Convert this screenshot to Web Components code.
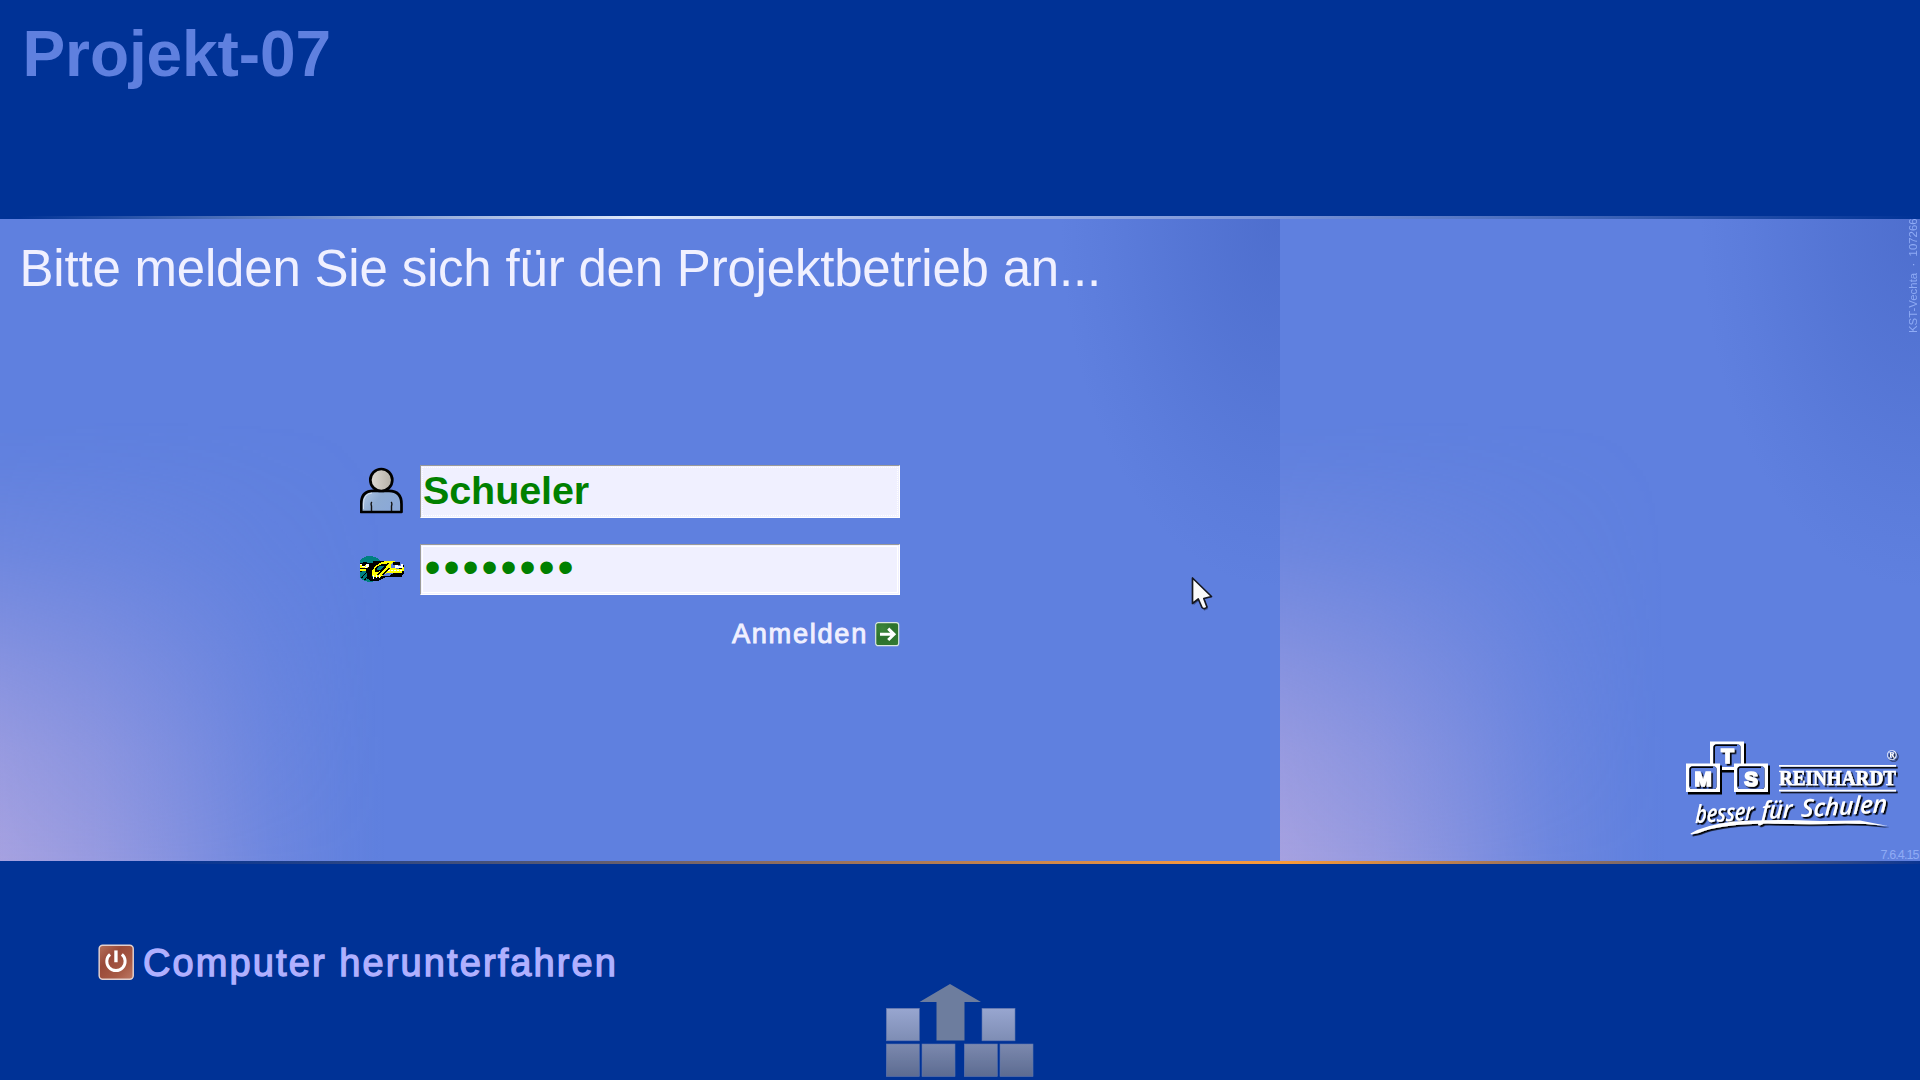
<!DOCTYPE html>
<html lang="de">
<head>
<meta charset="utf-8">
<title>Projekt-07</title>
<style>
html,body{margin:0;width:1920px;height:1080px;overflow:hidden;background:#003296}
body{font-family:"Liberation Sans",Arial,sans-serif}
</style>
</head>
<body>
<login-screen>
  <screen-title slot="top">Projekt-07</screen-title>
  <login-form slot="main" heading="Bitte melden Sie sich für den Projektbetrieb an...">
    <login-field kind="user"><user-icon slot="icon"></user-icon>Schueler</login-field>
    <login-field kind="secret"><key-icon slot="icon"></key-icon>••••••••</login-field>
    <submit-link slot="action">Anmelden</submit-link>
  </login-form>
  <brand-side slot="side" site="KST-Vechta&nbsp;&nbsp;·&nbsp;&nbsp;107266" version="7.6.4.15"></brand-side>
  <power-link slot="bottom">Computer herunterfahren</power-link>
  <block-mark slot="mark"></block-mark>
</login-screen>
<mouse-pointer></mouse-pointer>
<script>
const define = (name, render) => customElements.define(name, class extends HTMLElement {
  constructor() { super(); this.attachShadow({ mode: 'open' }); }
  connectedCallback() { this.shadowRoot.innerHTML = render(this); }
});

define('login-screen', () => `
<style>
:host{display:grid;grid-template-rows:216px 3px 642px 3px 216px;width:1920px;height:1080px;background:#003296}
.line1{background:linear-gradient(90deg,#003296 0,#003296 1%,#8ba3d6 21%,#dfe9fb 33.3%,#9db2e6 50%,#7a94d8 66%,#003296 100%)}
.line2{background:linear-gradient(90deg,#003296 0,#003296 8%,#525775 28%,#a87757 46%,#f49740 62%,#fa9a38 67%,#a87757 78%,#5a5d76 91%,#0b3592 100%)}
.mid{display:flex}
.pane{display:grid;grid-template:642px/100%;height:642px;background:
 radial-gradient(ellipse 220px 370px at 100% 0,rgba(64,96,192,.55),rgba(64,96,192,.34) 40%,rgba(64,96,192,.1) 80%,transparent) #5f80df}
.pane::before{content:"";grid-area:1/1;align-self:end;width:385px;height:440px;
 background:linear-gradient(90deg,#a6a1e0,rgba(166,161,224,.79) 25%,rgba(166,161,224,.55) 45%,rgba(166,161,224,.22) 70%,rgba(166,161,224,.05) 90%,rgba(166,161,224,0));
 -webkit-mask-image:linear-gradient(0deg,#000,rgba(0,0,0,.79) 25%,rgba(0,0,0,.55) 45%,rgba(0,0,0,.22) 70%,rgba(0,0,0,.05) 90%,transparent);
 mask-image:linear-gradient(0deg,#000,rgba(0,0,0,.79) 25%,rgba(0,0,0,.55) 45%,rgba(0,0,0,.22) 70%,rgba(0,0,0,.05) 90%,transparent)}
.pane slot{display:block;grid-area:1/1;z-index:1}
.a{width:1280px}.b{width:640px}
.bot{display:grid;grid-template-columns:860px 200px;align-items:start}
</style>
<slot name="top"></slot><div class="line1"></div>
<div class="mid"><div class="pane a"><slot name="main"></slot></div><div class="pane b"><slot name="side"></slot></div></div>
<div class="line2"></div>
<div class="bot"><slot name="bottom"></slot><slot name="mark"></slot></div>`);

define('screen-title', () => `
<style>:host{display:block;padding:17px 0 0 22.5px;font:bold 64px/74px "Liberation Sans",sans-serif;color:#5f80df;letter-spacing:-.1px;white-space:nowrap}</style><slot></slot>`);

define('login-form', el => `
<style>
:host{display:flex;flex-direction:column;height:642px}
h1{margin:0;padding:21px 0 0 19.5px;height:226px;box-sizing:border-box;font:51px/58px "Liberation Sans",sans-serif;letter-spacing:-.2px;color:#f0f0ff;white-space:nowrap}
.rows{padding:20px 0 0 360px;width:540px;display:flex;flex-direction:column;gap:26px}
.act{display:flex;justify-content:flex-end;width:900px;padding-top:22px}
</style>
<h1>${el.getAttribute('heading')}</h1>
<div class="rows"><slot></slot></div><div class="act"><slot name="action"></slot></div>`);

define('login-field', el => {
  const secret = el.getAttribute('kind') === 'secret';
  return `
<style>
:host{display:flex;align-items:flex-start;height:${secret ? 51 : 53}px}
.ic{width:60px;height:100%}
.box{box-sizing:border-box;width:480px;height:100%;background:#f0f0ff;border:1px solid;border-color:#9a9a98 #fff #fff #9a9a98;padding:1px}
.in{box-sizing:border-box;height:100%;border:1px ${secret ? 'solid #fff' : 'dotted #fff'};white-space:nowrap;color:#008000;
 font:bold 40px/46px "Liberation Sans",sans-serif;${secret ? 'font-weight:400;font-size:46px;line-height:41px;letter-spacing:2.9px;padding-left:1.5px' : 'font-size:39.5px;line-height:44px;letter-spacing:-.1px;padding-left:0'}}
</style><div class="ic"><slot name="icon"></slot></div><div class="box"><div class="in"><slot></slot></div></div>`;
});

define('submit-link', () => `
<style>
:host{display:flex;align-items:center;gap:7px;height:34px;color:#f0f0ff;font:27.2px/34px "Liberation Sans",sans-serif}
span{letter-spacing:1.7px;-webkit-text-stroke:.9px #f0f0ff}
svg{display:block}
</style><span><slot></slot></span>
<svg width="25" height="25" viewBox="0 0 25 25"><defs><radialGradient id="g" cx=".3" cy=".25" r=".9"><stop offset="0" stop-color="#3d863c"/><stop offset=".5" stop-color="#2c722c"/><stop offset="1" stop-color="#327932"/></radialGradient></defs>
<rect x=".7" y=".7" width="23" height="23" rx="2.5" fill="url(#g)" stroke="#d9e8df" stroke-width="1.2"/>
<path d="M5 12.3H18M13.2 6.7L19 12.3L13.2 18" fill="none" stroke="#fff" stroke-width="3"/></svg>`);

define('user-icon', () => `
<style>:host{display:block}svg{display:block}</style>
<svg width="48" height="53" viewBox="360 465 48 53"><defs>
<linearGradient id="h" x1="0" x2="1"><stop offset="0" stop-color="#dedad4"/><stop offset="1" stop-color="#b5b0a6"/></linearGradient>
<linearGradient id="b" x1="0" x2="1" y1="0" y2=".4"><stop offset="0" stop-color="#b5cbe6"/><stop offset=".5" stop-color="#8eabd2"/><stop offset="1" stop-color="#8aa8d8"/></linearGradient></defs>
<path d="M361.200 512V504C361.200 494 366 490.800 373 490.800H389C397 490.800 401.500 495 401.500 504V512Z" fill="url(#b)" stroke="#000" stroke-width="2.700" stroke-linejoin="round"/>
<path d="M371.500 511V506Q370.500 503 372 502M391.500 511V506Q392.500 503 391 502" fill="none" stroke="#111" stroke-width="1.4"/>
<path d="M363.500 509V504Q363.500 494 372 493" fill="none" stroke="#d5e2f2" stroke-width="1"/>
<circle cx="381.300" cy="480" r="11" fill="url(#h)" stroke="#000" stroke-width="2.700"/>
</svg>`);

define('key-icon', () => `
<style>:host{display:block}svg{display:block}</style>
<svg width="48" height="51" viewBox="360 544 48 51" shape-rendering="crispEdges">
<g transform="translate(344.500 550)">
<clipPath id="c"><path d="M14 0H60V40H14Z"/></clipPath>
<g clip-path="url(#c)">
<circle cx="25.500" cy="19" r="13" fill="#008080"/>
<path d="M14 13h4v-1h4v1h6v-2h13v2l-8 2-4 5-2 6 4 5h-3l-5-2-1-8-3-4-2 5-4 1H14z" fill="#000"/>
<path d="M14 15h3v1h3v-1h3v3h-2v3h-7z" fill="#ff0"/>
<path d="M14 14h3v1h-3zM17 16h3v1h-3zM21 14h3v3h-2v1h-2v-1h1z" fill="#fff"/>
<path d="M14 18.500h7" stroke="#000" stroke-width="1"/>
<path d="M24 27l2 4h8l7-4h16l2-3V15L45 26z" fill="#000"/>
<path d="M27 26V22l3-5 5-4 6-2h9v2h-2l-2 2v3h5l1 1h5v-2h2v4h-2v2H42l-6 4h-8v-1z" fill="#ff0"/>
<path d="M30 21v-2l3-3 4-2h5v2l-3 4-6 2h-3z" fill="#000"/>
<path d="M32 20v-1l3-3h4v1l-3 3z" fill="#008080"/>
<path d="M33 25l8-8 3-4M38 25l7-7" stroke="#000" fill="none" stroke-width="1"/>
<path d="M49 12h6v3h-7v-2z" fill="#000"/><path d="M50 15h3v1h3v-2h2v4h-7l-1-1z" fill="#fff"/>
<path d="M43 20.500h15" stroke="#fff" fill="none" stroke-dasharray="2 1"/>
<path d="M28.500 25v4M31.500 25v3M34.500 25v3" stroke="#fff" fill="none"/>
<path d="M17 28l6-7M20 30l4-5" stroke="#000" fill="none"/>
</g></g></svg>`);

define('brand-side', el => `
<style>
:host{display:grid;grid-template-columns:390px 250px;grid-template-rows:511px 131px;height:642px}
.site{grid-column:2;justify-self:end;width:14px;height:110px;margin-top:4px;writing-mode:vertical-rl;transform:rotate(180deg);font:11.4px/14px "Liberation Sans",sans-serif;color:#8fabf5;white-space:nowrap}
.logo{grid-column:2;display:block}
svg{display:block}
</style>
<div class="site">${el.getAttribute('site')}</div>
<svg class="logo" width="250" height="131" viewBox="0 0 250 131">
<defs>
<g id="box"><rect x="2" y="2" width="34" height="29" fill="#000"/><path fill="#fff" fill-rule="evenodd" d="M0 0H34V28.500H0ZM5.500 3Q3.500 3 3.500 5.500V23Q3.500 25.500 6 25.500H28Q30.500 25.500 30.500 23V5.500Q30.500 3 28 3Z"/><rect x="3.500" y="3" width="27" height="22.500" rx="3" fill="#5f80df"/><path d="M4.200 23V6Q4.200 3.800 6.500 3.800H27" fill="none" stroke="#000" stroke-width="1.500"/></g>
<filter id="s" x="-10%" y="-20%" width="120%" height="150%"><feDropShadow dx="1.700" dy="1.700" stdDeviation="0.200" flood-color="#000"/></filter>
</defs>
<use href="#box" x="40" y="11.500"/><use href="#box" x="16" y="33.500"/><use href="#box" x="64" y="33.500"/>
<g filter="url(#s)" fill="#fff">
<g font-family="Liberation Sans,sans-serif" font-weight="bold" font-size="20.500" stroke="#fff" stroke-width="1.700" text-anchor="middle"><text x="57.500" y="33">T</text><text x="33" y="55.500" textLength="20">M</text><text x="81" y="55.500">S</text></g>
<text x="109" y="54.500" font-family="Liberation Serif,serif" font-weight="bold" font-size="20" stroke="#fff" stroke-width=".5" textLength="117" lengthAdjust="spacingAndGlyphs">REINHARDT</text>
<text x="216.500" y="29.500" font-family="Liberation Serif,serif" font-weight="bold" font-size="14">®</text>
<rect x="109" y="35" width="117" height="1.700"/><rect x="109" y="59.700" width="117" height="1.700"/>
<g transform="translate(25 93) rotate(-3.200) skewX(-6)" font-family="Open Sans,sans-serif" font-style="italic" font-weight="600" font-size="24.500"><text x="0" y="0" textLength="58" lengthAdjust="spacingAndGlyphs">besser</text><text x="66" y="0" textLength="31" lengthAdjust="spacingAndGlyphs">für</text><text x="106" y="0" textLength="86" lengthAdjust="spacingAndGlyphs">Schulen</text></g>
<path d="M20.500 103.500Q35 95 62 91.800Q100 88.500 150 91L190 90.500L218 96Q185 92.500 160 94Q130 94.500 98 93.500Q55 94 34 101Q28 104 21 104.500Z"/>
</g>
<text x="210.500" y="128.500" font-family="Liberation Sans,sans-serif" font-size="12.500" fill="#8fabf5" textLength="39">${el.getAttribute('version')}</text>
</svg>`);

define('power-link', () => `
<style>
:host{display:flex;align-items:center;gap:8.500px;padding:76px 0 0 98px;height:44px;color:#b0b0ff;font:38px/44px "Liberation Sans",sans-serif;white-space:nowrap}
span{letter-spacing:2.1px;-webkit-text-stroke:1.300px #b0b0ff;padding-top:1px}
svg{display:block;width:36.500px;height:36.500px}
</style>
<svg viewBox="0 0 37 37"><defs><linearGradient id="p" x1="0" y1="0" x2="1" y2="1"><stop offset="0" stop-color="#b4705b"/><stop offset=".35" stop-color="#994a39"/><stop offset=".7" stop-color="#a75a45"/><stop offset="1" stop-color="#bd7864"/></linearGradient></defs>
<rect x="1.200" y="1.200" width="34.500" height="34.500" rx="3.500" fill="url(#p)" stroke="#e2cfcd" stroke-width="1.500"/>
<path d="M12.200 10.500A9.300 9.300 0 1 0 24.200 10.500" fill="none" stroke="#fff" stroke-width="3"/><path d="M18.200 6.500V18.500" stroke="#fff" stroke-width="3.400"/></svg>
<span><slot></slot></span>`);

define('block-mark', () => {
  const block = (x, y, f) => `<rect x="${x}" y="${y}" width="33" height="32.500" fill="url(#${f})" stroke="#5f75ae" stroke-width=".6"/>`;
  return `
<style>:host{display:block;padding-top:96px}svg{display:block}</style>
<svg width="200" height="120" viewBox="0 0 200 120"><defs>
<linearGradient id="t" x2="0" y2="1"><stop offset="0" stop-color="#98a6d0"/><stop offset="1" stop-color="#7e8db4"/></linearGradient>
<linearGradient id="u" x2="0" y2="1"><stop offset="0" stop-color="#7c89ae"/><stop offset="1" stop-color="#5c6b91"/></linearGradient>
<filter id="f"><feGaussianBlur stdDeviation=".7"/></filter></defs>
<g filter="url(#f)">${block(26.3, 48.3, 't')}${block(122, 48.3, 't')}${block(26.3, 84, 'u')}${block(62, 84, 'u')}${block(104.3, 84, 'u')}${block(140, 84, 'u')}
<path d="M90 24L121 42H104.500V80.500H76.500V42H59.500Z" fill="#6d7d9e"/></g></svg>`;
});

define('mouse-pointer', () => `
<style>:host{display:block;position:absolute;left:1190px;top:576px}svg{display:block}</style>
<svg width="26" height="38" viewBox="0 0 26 38"><path d="M2.500 2.500V28L8.500 23L13 33.500L17 31.800L13 21.500L21 20.500Z" transform="translate(1.200 1.200)" fill="#1c2a55" opacity=".45"/><path d="M2.500 2V27.500L8.300 23L12 31.500Q14.500 34 17 31L13.800 22.500L21.500 20.500Z" fill="#fafafa" stroke="#15171f" stroke-width="1.700" stroke-linejoin="round"/></svg>`);
</script>
</body>
</html>
